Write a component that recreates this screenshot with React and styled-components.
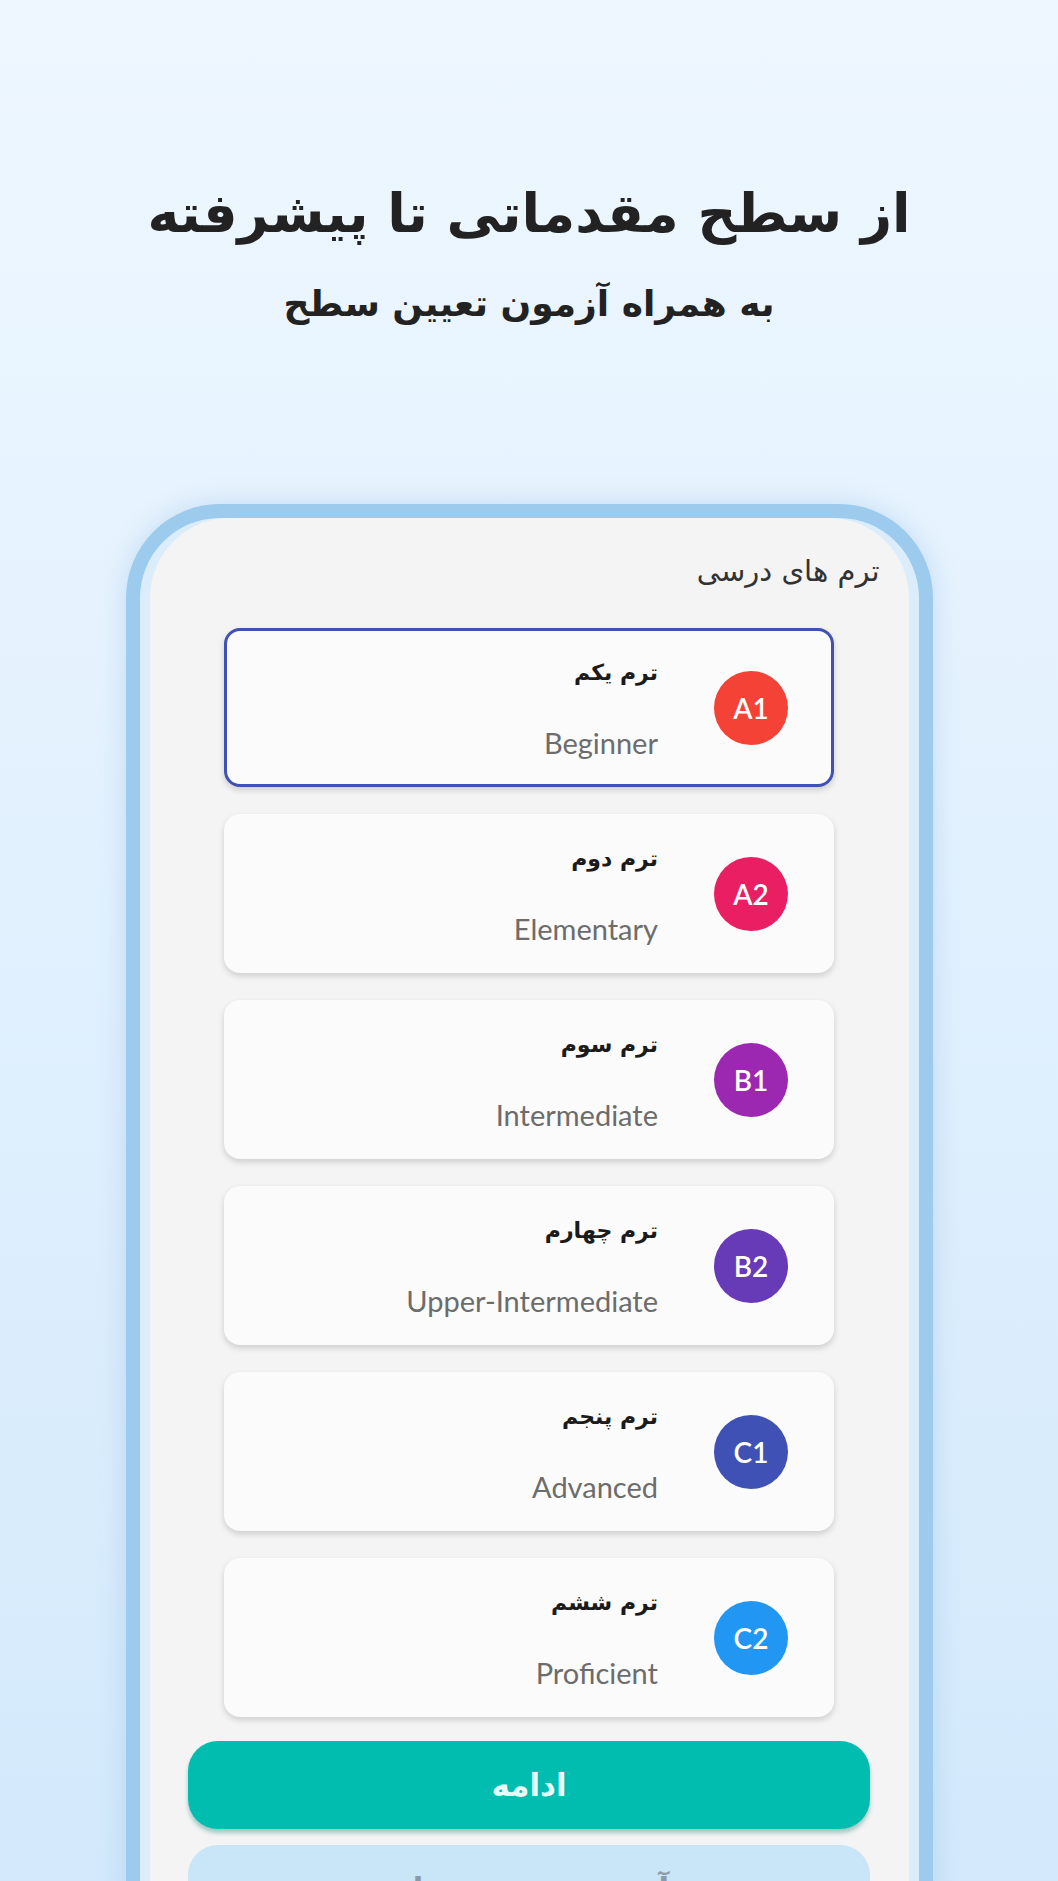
import React from "react";
import styled, { createGlobalStyle } from "styled-components";

const GlobalStyle = createGlobalStyle`
  html, body {
    margin: 0;
    padding: 0;
  }
  body {
    font-family: "DejaVu Sans", "Noto Sans", sans-serif;
  }
`;

const Page = styled.div`
  width: 1058px;
  height: 1881px;
  overflow: hidden;
  background: linear-gradient(180deg, #eef7ff 0%, #e2f1fe 45%, #d3e9fb 100%);
  display: flex;
  flex-direction: column;
  align-items: center;
  direction: rtl;
`;

const Heading = styled.h1`
  margin: 170px 0 0;
  font-size: 54px;
  line-height: 88px;
  font-weight: 700;
  color: #222;
`;

const SubHeading = styled.h2`
  margin: 18px 0 0;
  font-size: 36px;
  line-height: 56px;
  font-weight: 700;
  color: #222;
`;

const PhoneFrame = styled.div`
  margin-top: 172px;
  width: 807px;
  height: 1400px;
  flex-shrink: 0;
  border: 14px solid #9ccbee;
  border-bottom: none;
  border-radius: 94px 94px 0 0;
  background: #dbedfb;
  padding: 0 10px;
  box-sizing: border-box;
  box-shadow: 0 0 26px rgba(90, 150, 210, 0.25);
`;

const Screen = styled.div`
  height: 100%;
  background: #f4f4f4;
  border-radius: 80px 80px 0 0;
  padding: 36px 29px 0;
  box-sizing: border-box;
  display: flex;
  flex-direction: column;
  align-items: center;
`;

const ScreenTitle = styled.div`
  align-self: flex-start;
  font-size: 29px;
  line-height: 34px;
  color: #333;
`;

const CardList = styled.div`
  margin-top: 40px;
  width: 610px;
  display: flex;
  flex-direction: column;
  gap: 27px;
`;

const Card = styled.div`
  height: 159px;
  box-sizing: border-box;
  background: #fbfbfb;
  border-radius: 16px;
  border: 3px solid ${(p) => (p.$active ? "#3f51b5" : "transparent")};
  box-shadow: 0 3px 6px rgba(0, 0, 0, 0.16);
  display: flex;
  align-items: center;
  gap: 56px;
  padding: 0 43px 0 0;
`;

const Badge = styled.div`
  width: 74px;
  height: 74px;
  border-radius: 50%;
  background: ${(p) => p.$color};
  color: #fff;
  display: flex;
  align-items: center;
  justify-content: center;
  font-family: Lato, "Liberation Sans", sans-serif;
  font-size: 28px;
  font-weight: 600;
  direction: ltr;
`;

const CardText = styled.div`
  display: flex;
  flex-direction: column;
  gap: 34px;
`;

const CardTitle = styled.div`
  font-size: 22px;
  line-height: 36px;
  font-weight: 700;
  color: #1b1b1b;
`;

const CardLevel = styled.div`
  font-family: Lato, "Liberation Sans", sans-serif;
  font-size: 29px;
  line-height: 36px;
  color: #6c6c6c;
  direction: ltr;
  text-align: right;
`;

const Button = styled.button`
  margin-top: ${(p) => p.$gap}px;
  width: 682px;
  height: 88px;
  flex-shrink: 0;
  border: none;
  border-radius: 30px;
  font-family: inherit;
  font-size: 31px;
  font-weight: 700;
  background: ${(p) => (p.$primary ? "#00bdb0" : "#c9e5f8")};
  color: ${(p) => (p.$primary ? "#e8fbf8" : "#8a9aa6")};
  box-shadow: ${(p) => (p.$primary ? "0 4px 4px rgba(0, 120, 110, 0.35)" : "none")};
`;

const terms = [
  { code: "A1", title: "ترم یکم", level: "Beginner", color: "#f44336" },
  { code: "A2", title: "ترم دوم", level: "Elementary", color: "#e91e63" },
  { code: "B1", title: "ترم سوم", level: "Intermediate", color: "#9c27b0" },
  { code: "B2", title: "ترم چهارم", level: "Upper-Intermediate", color: "#673ab7" },
  { code: "C1", title: "ترم پنجم", level: "Advanced", color: "#3f51b5" },
  { code: "C2", title: "ترم ششم", level: "Proficient", color: "#2196f3" },
];

export default function App() {
  return (
    <>
      <GlobalStyle />
      <Page>
        <Heading>از سطح مقدماتی تا پیشرفته</Heading>
        <SubHeading>به همراه آزمون تعیین سطح</SubHeading>
        <PhoneFrame>
          <Screen>
            <ScreenTitle>ترم های درسی</ScreenTitle>
            <CardList>
              {terms.map((t, i) => (
                <Card key={t.code} $active={i === 0}>
                  <Badge $color={t.color}>{t.code}</Badge>
                  <CardText>
                    <CardTitle>{t.title}</CardTitle>
                    <CardLevel>{t.level}</CardLevel>
                  </CardText>
                </Card>
              ))}
            </CardList>
            <Button $primary $gap={24}>ادامه</Button>
            <Button $gap={16}>آزمون تعیین سطح</Button>
          </Screen>
        </PhoneFrame>
      </Page>
    </>
  );
}
